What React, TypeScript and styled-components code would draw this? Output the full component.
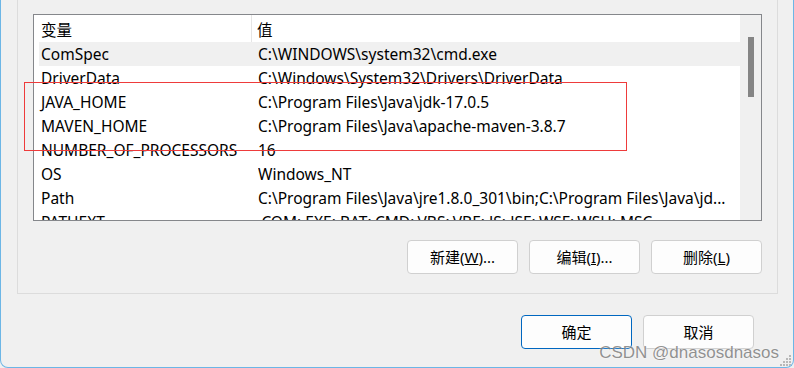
import React from "react";
import styled, { createGlobalStyle } from "styled-components";

const FONT = `"Noto Sans", "Noto Sans CJK SC", sans-serif`;

const GlobalStyle = createGlobalStyle`
  html, body {
    margin: 0;
    padding: 0;
    background: #f0f0f0;
  }
  * {
    box-sizing: border-box;
  }
`;

const Window = styled.div`
  position: relative;
  width: 794px;
  height: 368px;
  background: #f0f0f0;
  border: 1px solid #6cb6e6;
  border-top: none;
  border-radius: 0 0 8px 8px;
  overflow: hidden;
  font-family: ${FONT};
  font-size: 15.5px;
  color: #000;
  display: flex;
  flex-direction: column;
`;

const GroupBox = styled.div`
  margin-left: 16px;
  width: 761px;
  border: 1px solid #dcdcdc;
  border-top: none;
  padding: 14px 15px 19px 15px;
  display: flex;
  flex-direction: column;
`;

const ListView = styled.div`
  height: 207px;
  border: 1px solid #85878b;
  background: #fff;
  display: flex;
`;

const ListBody = styled.div`
  flex: 1;
  overflow: hidden;
  display: flex;
  flex-direction: column;
`;

const HeaderRow = styled.div`
  height: 27px;
  flex-shrink: 0;
  display: flex;
  align-items: stretch;
`;

const HeaderCell = styled.div<{ $width?: number; $pad: number }>`
  ${(p) => (p.$width ? `width: ${p.$width}px;` : "flex: 1;")}
  padding-left: ${(p) => p.$pad}px;
  display: flex;
  align-items: center;
  padding-top: 2px;
  ${(p) => (p.$width ? "border-right: 1px solid #e5e5e5;" : "")}
`;

const Row = styled.div<{ $selected?: boolean }>`
  height: 24px;
  flex-shrink: 0;
  margin-left: 5px;
  display: flex;
  align-items: center;
  white-space: nowrap;
  background: ${(p) => (p.$selected ? "#f0f0f0" : "transparent")};
`;

const NameCell = styled.div`
  width: 219px;
  padding-left: 2px;
  overflow: hidden;
`;

const ValueCell = styled.div`
  flex: 1;
  overflow: hidden;
`;

const ScrollTrack = styled.div`
  width: 21px;
  background: #f0f0f0;
  display: flex;
  justify-content: center;
  padding-top: 22px;
`;

const ScrollThumb = styled.div`
  width: 6px;
  height: 60px;
  background: #858585;
`;

const ButtonRow = styled.div<{ $gap: number }>`
  display: flex;
  justify-content: flex-end;
  gap: ${(p) => p.$gap}px;
`;

const GroupButtons = styled(ButtonRow)`
  margin-top: 19px;
`;

const DialogButtons = styled(ButtonRow)`
  margin-top: 21px;
  padding-right: 39px;
`;

const Button = styled.div<{ $primary?: boolean }>`
  width: 111px;
  height: 34px;
  background: #fdfdfd;
  border: 1px solid ${(p) => (p.$primary ? "#0067c0" : "#d0d0d0")};
  border-radius: 4px;
  display: flex;
  align-items: center;
  justify-content: center;
  font-size: 15px;
  padding-bottom: 1px;
`;

const Annotation = styled.div`
  position: absolute;
  left: 23px;
  top: 82px;
  width: 603px;
  height: 69px;
  border: 1px solid #ee3b3b;
  pointer-events: none;
`;

const Watermark = styled.div`
  position: absolute;
  right: 14px;
  bottom: 4px;
  font-family: "Liberation Sans", Arial, sans-serif;
  font-size: 17px;
  color: rgba(110, 110, 110, 0.75);
  text-shadow: 0 0 2px rgba(255, 255, 255, 0.8);
`;

const Grip = styled.svg`
  position: absolute;
  right: 1px;
  bottom: 1px;
`;

const rows: [string, string][] = [
  ["ComSpec", "C:\\WINDOWS\\system32\\cmd.exe"],
  ["DriverData", "C:\\Windows\\System32\\Drivers\\DriverData"],
  ["JAVA_HOME", "C:\\Program Files\\Java\\jdk-17.0.5"],
  ["MAVEN_HOME", "C:\\Program Files\\Java\\apache-maven-3.8.7"],
  ["NUMBER_OF_PROCESSORS", "16"],
  ["OS", "Windows_NT"],
  ["Path", "C:\\Program Files\\Java\\jre1.8.0_301\\bin;C:\\Program Files\\Java\\jd..."],
  ["PATHEXT", ".COM;.EXE;.BAT;.CMD;.VBS;.VBE;.JS;.JSE;.WSF;.WSH;.MSC"],
];

export default function App() {
  return (
    <>
      <GlobalStyle />
      <Window>
        <GroupBox>
          <ListView>
            <ListBody>
              <HeaderRow>
                <HeaderCell $width={218} $pad={7}>变量</HeaderCell>
                <HeaderCell $pad={5}>值</HeaderCell>
              </HeaderRow>
              {rows.map(([name, value], i) => (
                <Row key={name} $selected={i === 0}>
                  <NameCell>{name}</NameCell>
                  <ValueCell>{value}</ValueCell>
                </Row>
              ))}
            </ListBody>
            <ScrollTrack>
              <ScrollThumb />
            </ScrollTrack>
          </ListView>
          <GroupButtons $gap={11}>
            <Button>
              新建(<u>W</u>)...
            </Button>
            <Button>
              编辑(<u>I</u>)...
            </Button>
            <Button>
              删除(<u>L</u>)
            </Button>
          </GroupButtons>
        </GroupBox>
        <DialogButtons $gap={11}>
          <Button $primary>确定</Button>
          <Button>取消</Button>
        </DialogButtons>
        <Annotation />
        <Watermark>CSDN @dnasosdnasos</Watermark>
        <Grip width="12" height="12" viewBox="0 0 12 12">
          {[
            [9, 1],
            [6, 4],
            [9, 4],
            [3, 7],
            [6, 7],
            [9, 7],
            [0, 10],
            [3, 10],
            [6, 10],
            [9, 10],
          ].map(([x, y]) => (
            <rect key={`${x}-${y}`} x={x} y={y} width="2" height="2" fill="#b8b8b8" />
          ))}
        </Grip>
      </Window>
    </>
  );
}
